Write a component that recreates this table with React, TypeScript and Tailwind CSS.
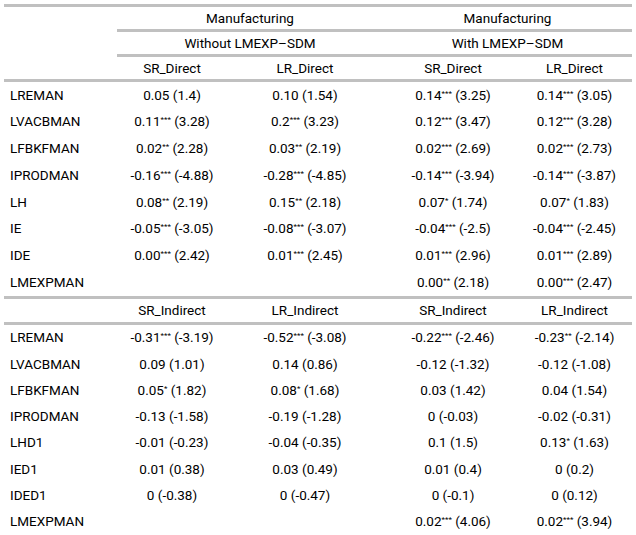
const cols = "grid grid-cols-[113px_110px_156px_140px_109px]";

type Cell = string;

const direct: [string, Cell, Cell, Cell, Cell][] = [
  ["LREMAN", "0.05 (1.4)", "0.10 (1.54)", "0.14*** (3.25)", "0.14*** (3.05)"],
  ["LVACBMAN", "0.11*** (3.28)", "0.2*** (3.23)", "0.12*** (3.47)", "0.12*** (3.28)"],
  ["LFBKFMAN", "0.02** (2.28)", "0.03** (2.19)", "0.02*** (2.69)", "0.02*** (2.73)"],
  ["IPRODMAN", "-0.16*** (-4.88)", "-0.28*** (-4.85)", "-0.14*** (-3.94)", "-0.14*** (-3.87)"],
  ["LH", "0.08** (2.19)", "0.15** (2.18)", "0.07* (1.74)", "0.07* (1.83)"],
  ["IE", "-0.05*** (-3.05)", "-0.08*** (-3.07)", "-0.04*** (-2.5)", "-0.04*** (-2.45)"],
  ["IDE", "0.00*** (2.42)", "0.01*** (2.45)", "0.01*** (2.96)", "0.01*** (2.89)"],
  ["LMEXPMAN", "", "", "0.00** (2.18)", "0.00*** (2.47)"],
];

const indirect: [string, Cell, Cell, Cell, Cell][] = [
  ["LREMAN", "-0.31*** (-3.19)", "-0.52*** (-3.08)", "-0.22*** (-2.46)", "-0.23** (-2.14)"],
  ["LVACBMAN", "0.09 (1.01)", "0.14 (0.86)", "-0.12 (-1.32)", "-0.12 (-1.08)"],
  ["LFBKFMAN", "0.05* (1.82)", "0.08* (1.68)", "0.03 (1.42)", "0.04 (1.54)"],
  ["IPRODMAN", "-0.13 (-1.58)", "-0.19 (-1.28)", "0 (-0.03)", "-0.02 (-0.31)"],
  ["LHD1", "-0.01 (-0.23)", "-0.04 (-0.35)", "0.1 (1.5)", "0.13* (1.63)"],
  ["IED1", "0.01 (0.38)", "0.03 (0.49)", "0.01 (0.4)", "0 (0.2)"],
  ["IDED1", "0 (-0.38)", "0 (-0.47)", "0 (-0.1)", "0 (0.12)"],
  ["LMEXPMAN", "", "", "0.02*** (4.06)", "0.02*** (3.94)"],
];

function Value({ text }: { text: string }) {
  const m = text.match(/^([^*]*)(\*+)(.*)$/);
  if (!m) return <>{text}</>;
  return (
    <>
      {m[1]}
      <span className="relative -top-[4px] text-[8px] leading-none">{m[2]}</span>
      {m[3]}
    </>
  );
}

function Line({ inset }: { inset?: boolean }) {
  return <div className={inset ? "ml-[113px] h-[3px] bg-[#c0c0c0]" : "h-[3px] bg-[#c0c0c0]"} />;
}

function Row({ row, h }: { row: [string, Cell, Cell, Cell, Cell]; h: string }) {
  return (
    <div className={`${cols} ${h} items-center`}>
      <div className="pl-[6px]">{row[0]}</div>
      <div className="text-center">
        <Value text={row[1]} />
      </div>
      <div className="text-center">
        <Value text={row[2]} />
      </div>
      <div className="text-center">
        <Value text={row[3]} />
      </div>
      <div className="pr-[6px] text-center">
        <Value text={row[4]} />
      </div>
    </div>
  );
}

export default function App() {
  return (
    <div className="h-[535px] w-[636px] bg-white pl-[4px] pt-[4px] text-[13.5px] leading-none text-black [font-family:Roboto,sans-serif]">
      <div className="w-[628px]">
        <Line />
        <div className={`${cols} h-[22px] items-center pt-[1px]`}>
          <div />
          <div className="col-span-2 text-center">Manufacturing</div>
          <div className="col-span-2 text-center">Manufacturing</div>
        </div>
        <Line inset />
        <div className={`${cols} h-[22px] items-center pt-[1px]`}>
          <div />
          <div className="col-span-2 text-center">Without LMEXP–SDM</div>
          <div className="col-span-2 text-center">With LMEXP–SDM</div>
        </div>
        <Line inset />
        <div className={`${cols} h-[22px] items-center pt-[1px]`}>
          <div />
          <div className="text-center">SR_Direct</div>
          <div className="text-center">LR_Direct</div>
          <div className="text-center">SR_Direct</div>
          <div className="pr-[6px] text-center">LR_Direct</div>
        </div>
        <Line />
        {direct.map((r) => (
          <Row key={"d" + r[0]} row={r} h="h-[26.75px]" />
        ))}
        <Line />
        <div className={`${cols} h-[23px] items-center`}>
          <div />
          <div className="text-center">SR_Indirect</div>
          <div className="text-center">LR_Indirect</div>
          <div className="text-center">SR_Indirect</div>
          <div className="pr-[6px] text-center">LR_Indirect</div>
        </div>
        <Line />
        {indirect.map((r) => (
          <Row key={"i" + r[0]} row={r} h="h-[26.25px]" />
        ))}
      </div>
    </div>
  );
}
